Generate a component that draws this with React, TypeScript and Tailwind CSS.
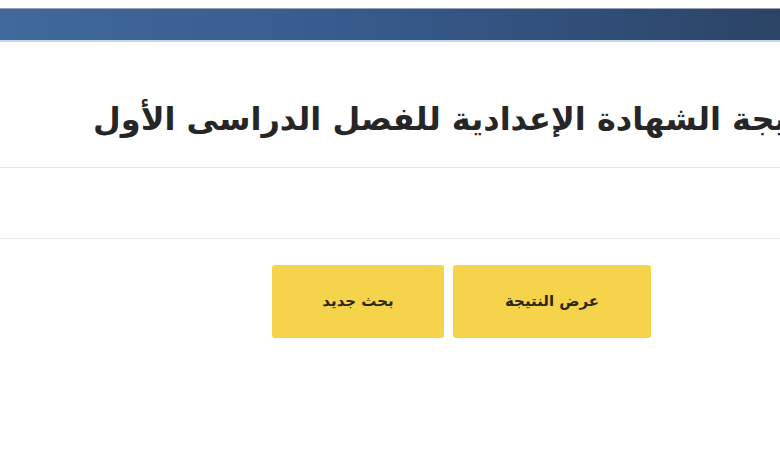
import React from 'react';

const buttons = ['عرض النتيجة', 'بحث جديد'];

export default function App() {
  return (
    <div className="w-[780px] h-[470px] overflow-hidden bg-white" style={{ fontFamily: '"DejaVu Sans", sans-serif' }}>
      {/* Top bar */}
      <div className="h-[9px] bg-white border-b border-[#9aa3ad]" />
      <div className="h-[33px] bg-gradient-to-r from-[#41699c] via-[#36598a] to-[#2b4466] border-b-2 border-[#c9d6e6]" />

      {/* Title */}
      <div className="h-[126px] pl-[93px] pt-[57px] border-b border-[#e6e6e6] overflow-hidden">
        <h1 dir="rtl" className="whitespace-nowrap w-max text-[32px] leading-[40px] font-bold text-[#262626]">
          نتيجة الشهادة الإعدادية للفصل الدراسى الأول
        </h1>
      </div>

      {/* Empty input row */}
      <div className="h-[71px] border-b border-[#e8e8e8]" />

      {/* Buttons */}
      <div dir="rtl" className="flex pt-[26px] pr-[129px] gap-[9px]">
        {buttons.map((label, i) => (
          <button
            key={label}
            className={`h-[73px] ${i === 0 ? 'w-[198px]' : 'w-[172px]'} rounded-[3px] bg-[#f5d34b] text-[15px] font-bold text-[#2b2713]`}
          >
            {label}
          </button>
        ))}
      </div>
    </div>
  );
}
